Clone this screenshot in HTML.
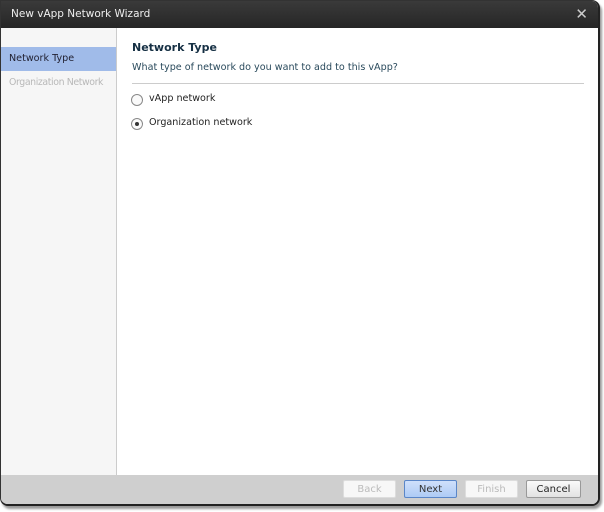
<!DOCTYPE html>
<html><head><style>
body{margin:0;width:604px;height:512px;background:#fff;position:relative;overflow:hidden;font-family:"DejaVu Sans","Liberation Sans",sans-serif;font-size:9.6px;}
.dlg{position:absolute;left:0;top:0;width:597px;height:503px;border:1px solid #333;border-right:2px solid #222;border-bottom:2px solid #222;border-radius:0 8px 8px 8px;overflow:hidden;background:#fff;box-shadow:2px 3px 2px #999;}
.title{position:absolute;left:0;top:0;right:0;height:27px;background:linear-gradient(#3a3a3a,#262626);color:#eee;font-size:10.5px;line-height:27px;padding-left:10px;}
.x{position:absolute;right:10px;top:0;color:#ccc;font-size:15px;}
.left{position:absolute;left:0;top:27px;width:115px;height:447px;background:#f6f6f6;border-right:1px solid #ccc;}
.nav{position:absolute;left:0;width:115px;height:24px;line-height:24px;padding-left:8px;box-sizing:border-box;white-space:nowrap;}
.sel{top:19px;background:#a0bbe9;color:#223;}
.dis{top:43px;color:#b8b8b8;letter-spacing:-0.4px;font-size:9.4px;}
.h{position:absolute;left:131px;top:40px;font-weight:bold;font-size:11px;color:#163044;}
.q{position:absolute;left:131px;top:61px;color:#2a4a5c;}
.hr{position:absolute;left:131px;top:82px;width:452px;border-top:1px solid #ccc;}
.r{position:absolute;left:130px;width:10px;height:10px;border:1px solid #888;border-radius:50%;background:#fafafa;}
.r i{position:absolute;left:3px;top:3px;width:4px;height:4px;border-radius:50%;background:#333;}
.l{position:absolute;left:148px;color:#222;}
.foot{position:absolute;left:0;right:0;top:474px;height:30px;background:#cfcfcf;}
.b{position:absolute;top:480px;height:18px;width:52px;line-height:18px;text-align:center;border:1px solid #bbb;border-radius:2px;background:#f4f4f4;box-sizing:border-box;font-size:10px;}
</style></head><body>
<div class="dlg">
<div class="title">New vApp Network Wizard<span class="x">✕</span></div>
<div class="left"><div class="nav sel">Network Type</div><div class="nav dis">Organization Network</div></div>
<div class="h">Network Type</div>
<div class="q">What type of network do you want to add to this vApp?</div>
<div class="hr"></div>
<div class="r" style="top:93px"></div><div class="l" style="top:92px">vApp network</div>
<div class="r" style="top:117px"><i></i></div><div class="l" style="top:116px">Organization network</div>
<div class="foot"></div>
</div>
<div class="b" style="left:343px;width:53px;color:#bbb;background:#f7f7f7;border-color:#ddd">Back</div>
<div class="b" style="left:404px;width:53px;background:linear-gradient(#cfe0fb,#aecbf5);border-color:#5a86c8;color:#333">Next</div>
<div class="b" style="left:465px;width:53px;color:#bbb;background:#f7f7f7;border-color:#ddd">Finish</div>
<div class="b" style="left:526px;width:55px;color:#222;background:linear-gradient(#fafafa,#e2e2e2);border-color:#999">Cancel</div>
</body></html>
